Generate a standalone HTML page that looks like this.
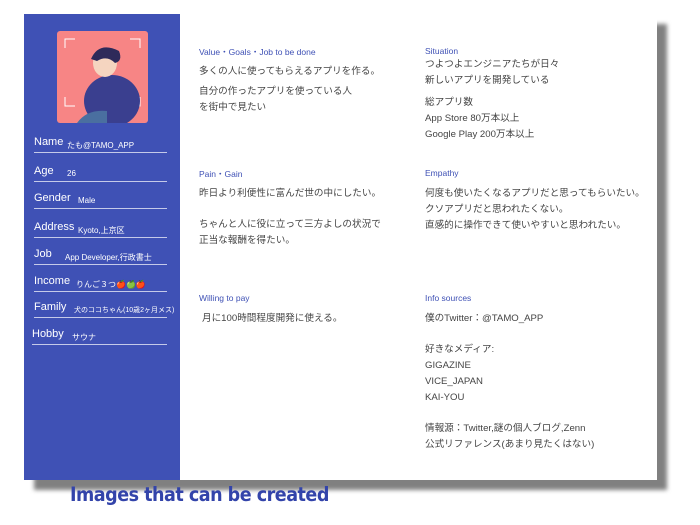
<html><head><style>
body{margin:0;width:700px;height:525px;background:#fff;position:relative;font-family:"Liberation Sans","Noto Sans CJK JP",sans-serif;overflow:hidden}
.shadow{position:absolute;left:34px;top:24px;width:633px;height:466px;background:#808080;filter:blur(2px)}
.card{position:absolute;left:24px;top:14px;width:633px;height:466px;background:#fff}
.side{position:absolute;left:0;top:0;width:156px;height:466px;background:#3f51b5}
.img{position:absolute;left:33px;top:17px;width:91px;height:92px;background:#f78585;border-radius:3px;overflow:hidden}
.f{position:absolute;left:10px;width:133px;border-bottom:1px solid #c5cae9;color:#fff;height:16px;white-space:nowrap}
.f b{font-weight:normal;font-size:11px;position:absolute;left:0;top:0}
.f span{font-size:8px;position:absolute;top:4px}
.h{position:absolute;font-size:8.5px;color:#3f51b5}
.t{position:absolute;font-size:9.6px;color:#444;line-height:16px;white-space:nowrap}
.foot{position:absolute;left:70px;top:483px;font-size:19.5px;font-weight:bold;color:#3344aa;letter-spacing:-0.5px;font-family:"DejaVu Sans Condensed","DejaVu Sans",sans-serif}
</style></head><body>
<div class="shadow"></div>
<div class="card">
<div class="side">
<div class="img">
<svg width="91" height="92"><g stroke="#fff" stroke-width="1" fill="none"><path d="M8 17V8h10M73 8h10v9M8 66v9h10M83 66v9H73"/></g>
<ellipse cx="55" cy="70" rx="28" ry="26" fill="#3a3f8f"/><ellipse cx="48" cy="32" rx="12" ry="14" fill="#f5d5c0"/><path d="M34 28q8-18 28-8q4 10-4 12q-8-8-18-2z" fill="#2e2a5a"/><path d="M20 92q10-14 30-12l0 12z" fill="#4a6fa0"/></svg>
</div>
<div class="f" style="top:122px"><b>Name</b><span style="left:33px">たも@TAMO_APP</span></div>
<div class="f" style="top:151px"><b>Age</b><span style="left:33px">26</span></div>
<div class="f" style="top:178px"><b>Gender</b><span style="left:44px">Male</span></div>
<div class="f" style="top:207px"><b>Address</b><span style="left:44px">Kyoto,上京区</span></div>
<div class="f" style="top:234px"><b>Job</b><span style="left:31px">App Developer,行政書士</span></div>
<div class="f" style="top:261px"><b>Income</b><span style="left:42px">りんご３つ🍎🍏🍎</span></div>
<div class="f" style="top:287px"><b>Family</b><span style="left:40px;font-size:7px">犬のココちゃん(10歳2ヶ月メス)</span></div>
<div class="f" style="top:314px;left:8px;width:135px"><b>Hobby</b><span style="left:40px">サウナ</span></div>
</div>
<div class="h" style="left:175px;top:32px">Value・Goals・Job to be done</div>
<div class="t" style="left:175px;top:50px">多くの人に使ってもらえるアプリを作る。</div>
<div class="t" style="left:175px;top:70px">自分の作ったアプリを使っている人<br>を街中で見たい</div>
<div class="h" style="left:401px;top:32px">Situation</div>
<div class="t" style="left:401px;top:43px">つよつよエンジニアたちが日々<br>新しいアプリを開発している</div>
<div class="t" style="left:401px;top:81px">総アプリ数<br>App Store 80万本以上<br>Google Play 200万本以上</div>
<div class="h" style="left:175px;top:154px">Pain・Gain</div>
<div class="t" style="left:175px;top:172px">昨日より利便性に富んだ世の中にしたい。</div>
<div class="t" style="left:175px;top:203px">ちゃんと人に役に立って三方よしの状況で<br>正当な報酬を得たい。</div>
<div class="h" style="left:401px;top:154px">Empathy</div>
<div class="t" style="left:401px;top:172px">何度も使いたくなるアプリだと思ってもらいたい。<br>クソアプリだと思われたくない。<br>直感的に操作できて使いやすいと思われたい。</div>
<div class="h" style="left:175px;top:279px">Willing to pay</div>
<div class="t" style="left:178px;top:297px">月に100時間程度開発に使える。</div>
<div class="h" style="left:401px;top:279px">Info sources</div>
<div class="t" style="left:401px;top:297px">僕のTwitter：@TAMO_APP</div>
<div class="t" style="left:401px;top:328px">好きなメディア:<br>GIGAZINE<br>VICE_JAPAN<br>KAI-YOU</div>
<div class="t" style="left:401px;top:407px">情報源：Twitter,謎の個人ブログ,Zenn<br>公式リファレンス(あまり見たくはない)</div>
</div>
<div class="foot">Images that can be created</div>
</body></html>
